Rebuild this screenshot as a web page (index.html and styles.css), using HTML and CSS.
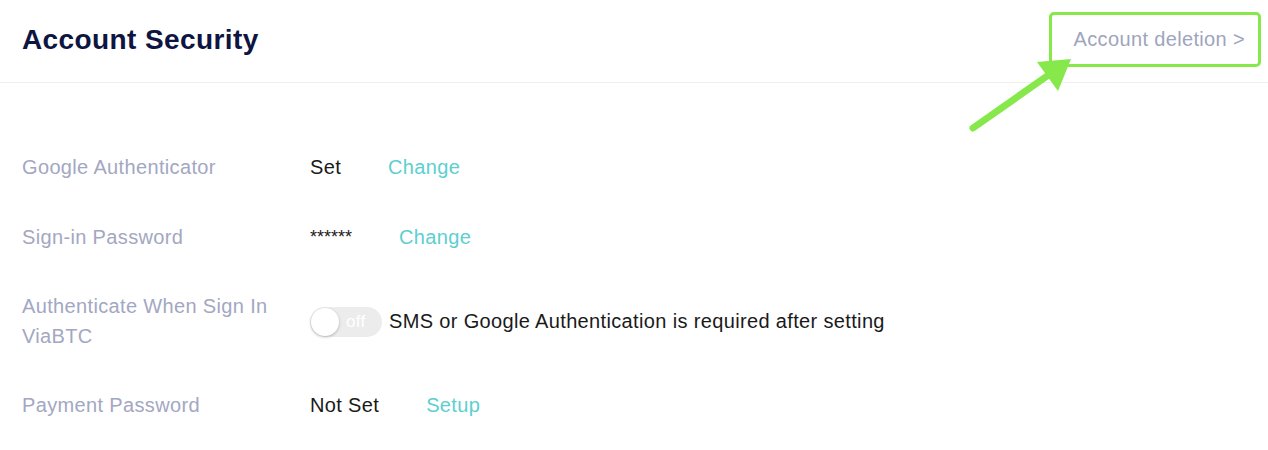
FILE: index.html
```html
<!DOCTYPE html>
<html lang="en">
<head>
  <meta charset="UTF-8">
  <title>Account Security</title>
  <link rel="stylesheet" href="styles.css">
</head>
<body>
  <div class="header">
    <h1>Account Security</h1>
    <a class="delete-link" href="#">Account deletion &gt;</a>
    <svg class="arrow" width="120" height="90" viewBox="0 0 120 90">
      <line x1="13" y1="78" x2="90" y2="24" stroke="#86e84a" stroke-width="7" stroke-linecap="round"/>
      <polygon points="111,9 77,12 98,41" fill="#86e84a"/>
    </svg>
  </div>

  <div class="settings">
    <div class="row">
      <div class="label">Google Authenticator</div>
      <div class="value">Set</div>
      <a class="action" href="#">Change</a>
    </div>
    <div class="row">
      <div class="label">Sign-in Password</div>
      <div class="value stars">******</div>
      <a class="action" href="#">Change</a>
    </div>
    <div class="row">
      <div class="label">Authenticate When Sign In ViaBTC</div>
      <div class="toggle"><span class="knob"></span><span class="toggle-text">off</span></div>
      <div class="note">SMS or Google Authentication is required after setting</div>
    </div>
    <div class="row">
      <div class="label">Payment Password</div>
      <div class="value">Not Set</div>
      <a class="action" href="#">Setup</a>
    </div>
  </div>
</body>
</html>
```

FILE: styles.css
```css
body {
  margin: 0;
  font-family: "Liberation Sans", Arial, sans-serif;
  background: #fff;
}
.header {
  position: relative;
  height: 82px;
  border-bottom: 1px solid #eeeef0;
  display: flex;
  align-items: center;
  justify-content: space-between;
  padding: 0 7px 0 22px;
}
h1 {
  margin: 0 0 2px;
  font-size: 28px;
  letter-spacing: 0.4px;
  font-weight: bold;
  color: #0e1540;
}
.delete-link {
  display: block;
  margin-bottom: 3px;
  padding: 12px 13px 13px 22px;
  border: 3px solid #86e84a;
  border-radius: 5px;
  font-size: 20px;
  line-height: 24px;
  letter-spacing: 0.35px;
  color: #a0a4bd;
  text-decoration: none;
}
.arrow {
  position: absolute;
  left: 960px;
  top: 50px;
}
.settings {
  padding: 70px 22px 0;
  display: flex;
  flex-direction: column;
  gap: 40px;
}
.row {
  display: flex;
  align-items: center;
  font-size: 20px;
  letter-spacing: 0.35px;
  line-height: 29.5px;
}
.label {
  width: 262px;
  margin-right: 26px;
  color: #a3a7c2;
}
.value {
  color: #1a1a1a;
}
.stars {
  font-size: 18px;
  letter-spacing: 0;
}
.action {
  margin-left: 47px;
  color: #5dcfcf;
  text-decoration: none;
}
.toggle {
  position: relative;
  width: 72px;
  height: 30px;
  border-radius: 15px;
  background: #ececec;
  margin-right: 7px;
}
.knob {
  position: absolute;
  left: 1px;
  top: 1px;
  width: 28px;
  height: 28px;
  border-radius: 50%;
  background: #fff;
  box-shadow: 0 1px 3px rgba(0, 0, 0, 0.25);
}
.toggle-text {
  position: absolute;
  left: 36px;
  top: 0;
  font-size: 17px;
  line-height: 30px;
  color: #fff;
}
.note {
  color: #1a1a1a;
}
```
